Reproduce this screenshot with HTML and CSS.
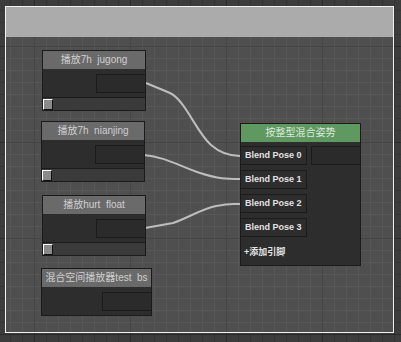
FILE: index.html
```html
<!DOCTYPE html>
<html lang="zh">
<head>
    <meta charset="UTF-8">
    <title>Blend Graph</title>
    <link rel="stylesheet" href="styles.css">
</head>
<body>
    <div class="panel">
        <div class="topbar"></div>
        <div class="canvas">
            <svg class="wires" width="387" height="295" viewBox="0 0 387 295">
                <path d="M140,46 L164,56 C180,64 190,95 205,108 C213,115 222,119 234,119" />
                <path d="M138,118 C160,120 175,130 194,136 S220,142 234,142" />
                <path d="M139,191 L167,186 C180,182 195,172 210,169 S225,167 234,167" />
            </svg>

            <div class="node node-jugong">
                <div class="node-title">播放7h  jugong</div>
                <div class="node-body"><div class="field"></div></div>
                <div class="slider"><span class="knob"></span></div>
            </div>

            <div class="node node-nianjing">
                <div class="node-title">播放7h  nianjing</div>
                <div class="node-body"><div class="field"></div></div>
                <div class="slider"><span class="knob"></span></div>
            </div>

            <div class="node node-hurt">
                <div class="node-title">播放hurt  float</div>
                <div class="node-body"><div class="field"></div></div>
                <div class="slider"><span class="knob"></span></div>
            </div>

            <div class="node node-space">
                <div class="node-title">混合空间播放器test  bs</div>
                <div class="node-body"><div class="field"></div></div>
            </div>

            <div class="node blend">
                <div class="node-title green">按整型混合姿势</div>
                <div class="blend-body">
                    <div class="pin-row">
                        <div class="pin">Blend Pose 0</div>
                        <div class="pin-field"></div>
                    </div>
                    <div class="pin-row"><div class="pin">Blend Pose 1</div></div>
                    <div class="pin-row"><div class="pin">Blend Pose 2</div></div>
                    <div class="pin-row"><div class="pin">Blend Pose 3</div></div>
                    <div class="add-pin">+添加引脚</div>
                </div>
            </div>
        </div>
    </div>
</body>
</html>
```
FILE: styles.css
```css
body {
    margin: 0;
    height: 342px;
    overflow: hidden;
    font-family: "Liberation Sans", "Noto Sans CJK SC", sans-serif;
    background-color: #3c3c3c;
    background-image:
        linear-gradient(to right, #2b2b2b 1px, transparent 1px),
        linear-gradient(to bottom, #2b2b2b 1px, transparent 1px),
        linear-gradient(to right, #343434 1px, transparent 1px),
        linear-gradient(to bottom, #343434 1px, transparent 1px);
    background-size: 96px 96px, 96px 96px, 12px 12px, 12px 12px;
    background-position: 34px 46px, 34px 46px, 10px 10px, 10px 10px;
    padding-top: 6px;
    box-sizing: border-box;
}
.panel {
    margin-left: 5px;
    width: 389px;
    height: 327px;
    border: 1px solid #f2f2f2;
    box-sizing: border-box;
    display: flex;
    flex-direction: column;
}
.topbar {
    height: 30px;
    background: #ababab;
}
.canvas {
    flex: 1;
    position: relative;
    background-color: #4f4f4f;
    background-image:
        linear-gradient(to right, #454545 1px, transparent 1px),
        linear-gradient(to bottom, #454545 1px, transparent 1px),
        linear-gradient(to right, #575757 1px, transparent 1px),
        linear-gradient(to bottom, #575757 1px, transparent 1px);
    background-size: 96px 96px, 96px 96px, 12px 12px, 12px 12px;
    background-position: 28px 9px, 28px 9px, 4px 9px, 4px 9px;
}
.wires {
    position: absolute;
    left: 0;
    top: 0;
}
.wires path {
    fill: none;
    stroke: #bdbdbd;
    stroke-width: 2;
}
.node {
    position: absolute;
    border: 1px solid #1b1b1b;
    background: #2d2d2d;
    box-sizing: border-box;
}
.node-jugong { left: 36px; top: 13px; width: 104px; }
.node-nianjing { left: 35px; top: 84px; width: 104px; }
.node-hurt { left: 36px; top: 158px; width: 104px; }
.node-space { left: 35px; top: 231px; width: 111px; }
.blend { left: 234px; top: 86px; width: 121px; }

.node-title {
    height: 18px;
    line-height: 18px;
    background: #6a6a6a;
    color: #cfcfcf;
    font-size: 10px;
    text-align: center;
    white-space: pre;
}
.node-title.green {
    background: #5f995f;
    color: #dde8dd;
}
.node-body {
    height: 28px;
    display: flex;
    justify-content: flex-end;
    align-items: flex-start;
}
.field {
    margin-top: 5px;
    width: 49px;
    height: 19px;
    border: 1px solid #1b1b1b;
    border-right: none;
    background: #2b2b2b;
    box-sizing: border-box;
}
.slider {
    height: 12px;
    border-top: 1px solid #1b1b1b;
    background: #3a3a3a;
    display: flex;
    align-items: center;
}
.knob {
    width: 10px;
    height: 11px;
    background: #8a8a8a;
    border: 1px solid #ffffff;
    border-right-color: #111;
    border-bottom-color: #111;
    box-sizing: border-box;
}
.blend-body {
    padding: 4px 0 6px;
    display: flex;
    flex-direction: column;
    gap: 5px;
}
.pin-row {
    display: flex;
    gap: 4px;
}
.pin {
    width: 67px;
    height: 19px;
    margin-left: -1px;
    border: 1px solid #1b1b1b;
    box-sizing: border-box;
    font-size: 9px;
    font-weight: bold;
    line-height: 17px;
    color: #e2e2e2;
    padding-left: 4px;
}
.pin-field {
    flex: 1;
    height: 19px;
    border: 1px solid #1b1b1b;
    border-right: none;
    background: #2b2b2b;
    box-sizing: border-box;
}
.add-pin {
    margin-top: 3px;
    height: 14px;
    line-height: 14px;
    padding-left: 3px;
    font-size: 9px;
    font-weight: bold;
    color: #e2e2e2;
}
```
